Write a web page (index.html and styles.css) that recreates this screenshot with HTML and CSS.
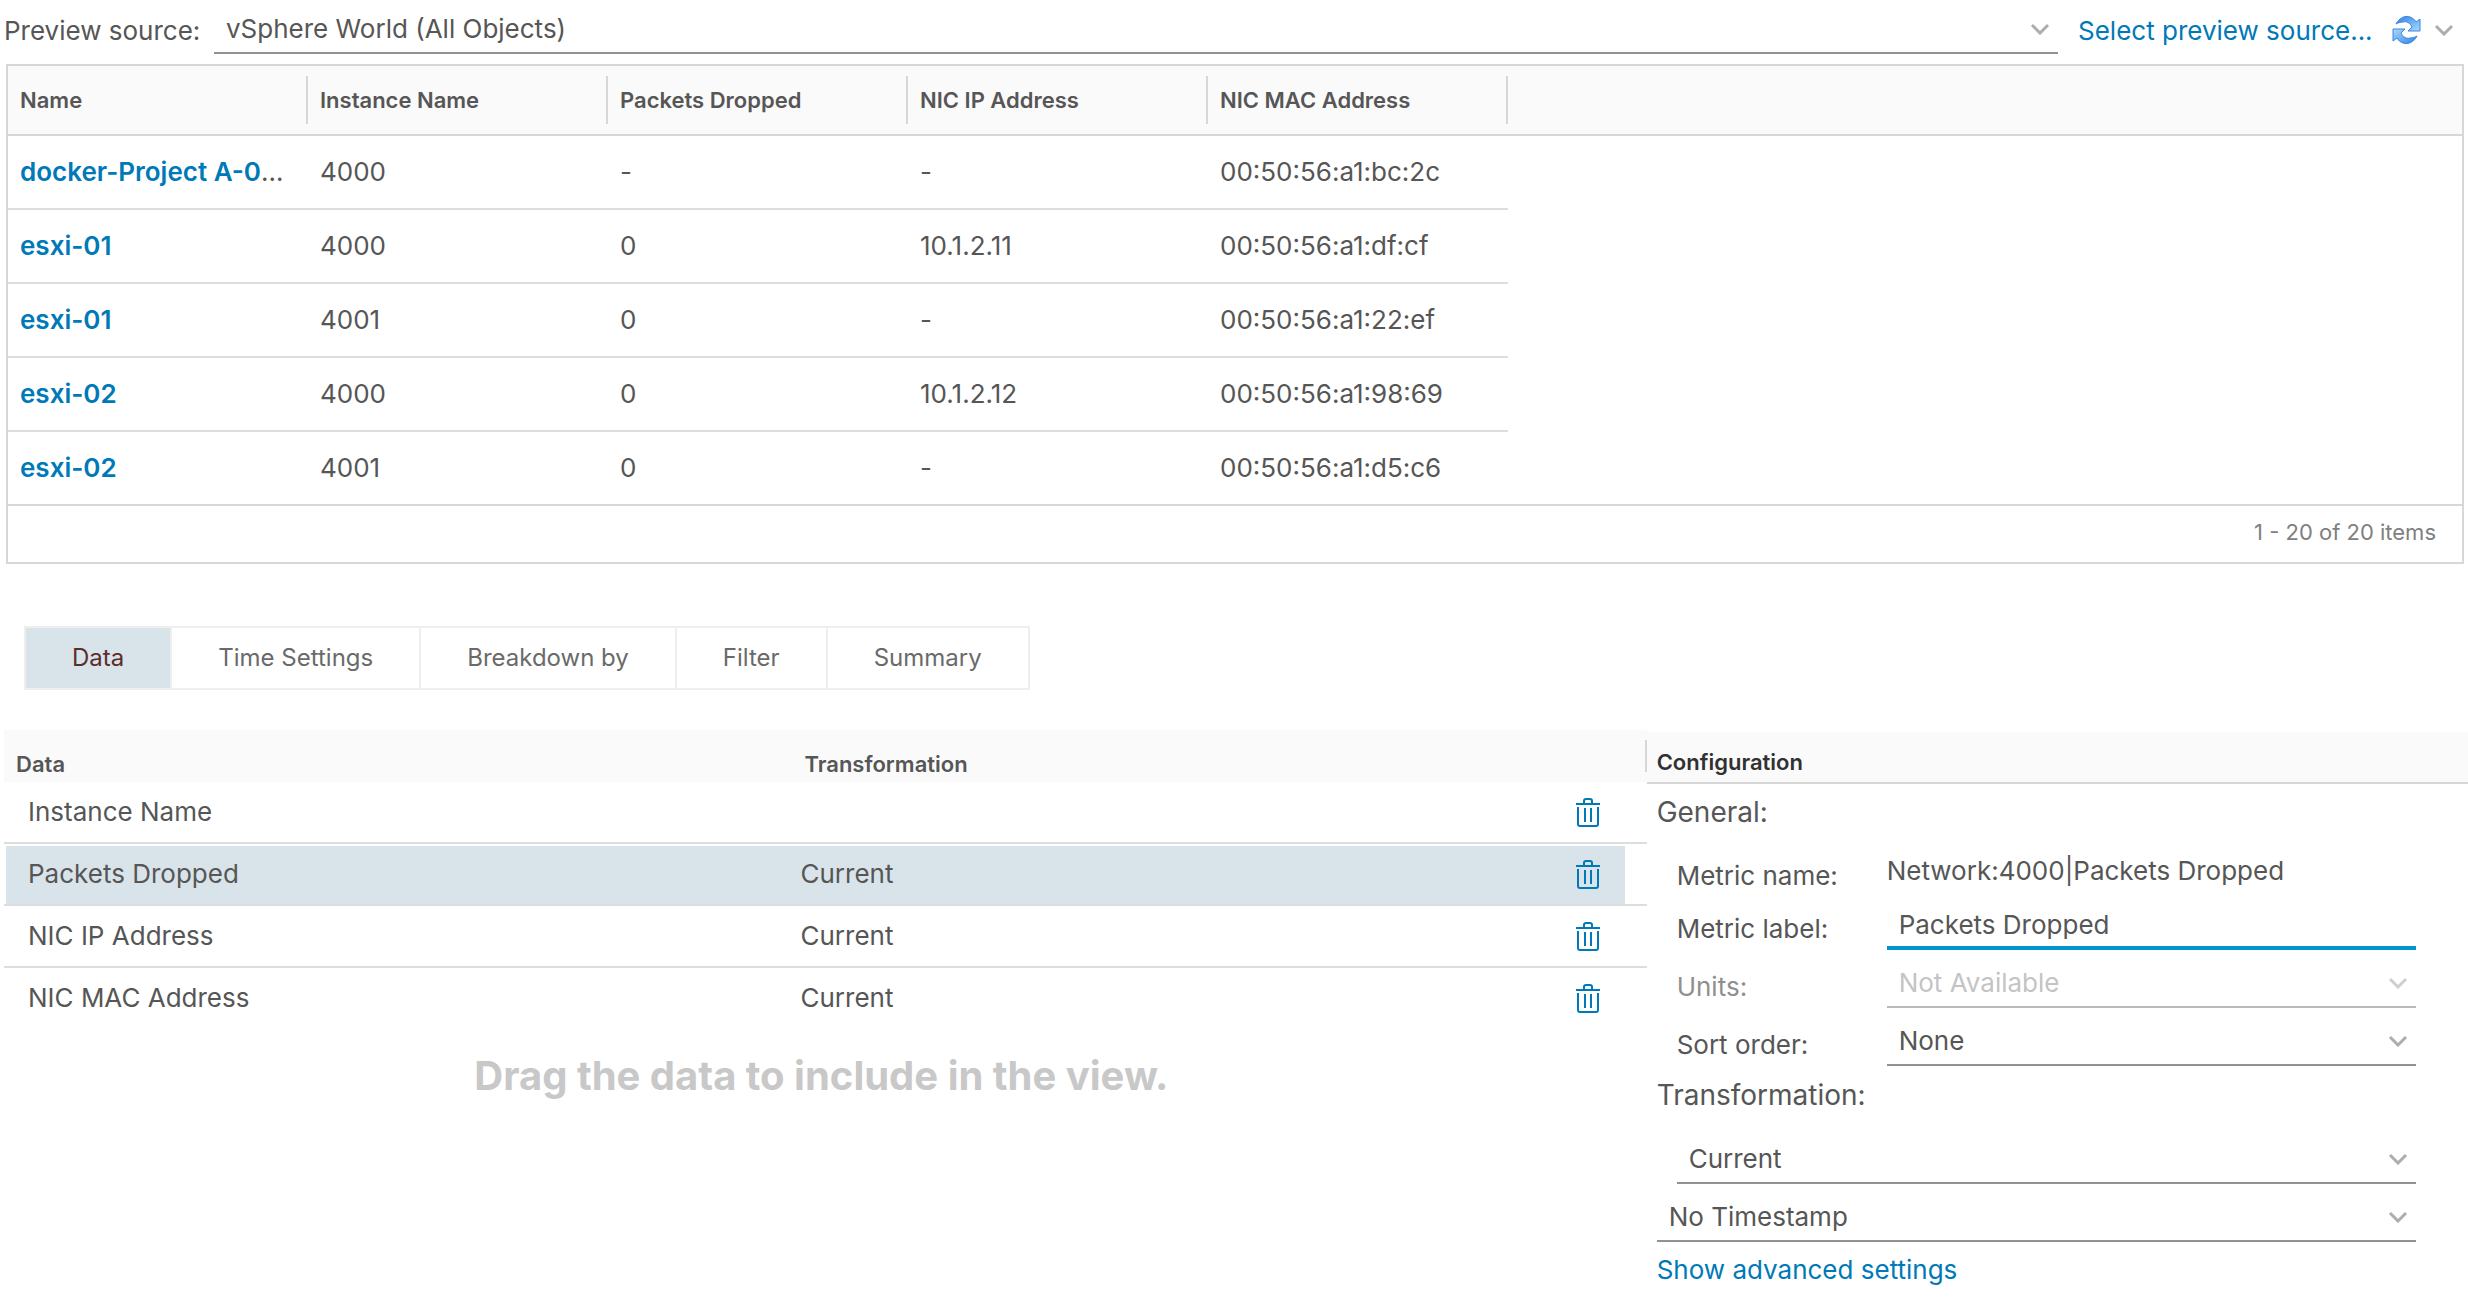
FILE: index.html
```html
<!DOCTYPE html>
<html lang="en">
<head>
    <meta charset="UTF-8">
    <meta name="viewport" content="width=device-width, initial-scale=1.0">
    <title>Edit View</title>
    <link rel="stylesheet" href="styles.css">
</head>
<body>
    <!-- Shared icons -->
    <svg class="sprite" aria-hidden="true">
        <symbol id="chevron" viewBox="0 0 20 12">
            <path d="M2 2l8 8 8-8" fill="none" stroke="currentColor" stroke-width="3"/>
        </symbol>
        <symbol id="trash" viewBox="0 0 26 30">
            <path d="M1 6h24M9 5V3q0-2 2-2h4q2 0 2 2v2" fill="none" stroke="currentColor" stroke-width="2"/>
            <path d="M3 9v17q0 2 2 2h16q2 0 2-2V9M10 10v14M16 10v14" fill="none" stroke="currentColor" stroke-width="2"/>
        </symbol>
        <symbol id="refresh" viewBox="0 0 30 30">
            <linearGradient id="refreshFill" x1="0" y1="0" x2="1" y2="1">
                <stop offset="0" stop-color="#2f80e0"/>
                <stop offset="1" stop-color="#a9dcff"/>
            </linearGradient>
            <path id="refreshArrow" d="M4 9C7 3 13 0 18 2c3 1 5 3 6 5l4-3v12H16l4-4c-2-4-5-6-9-5-3 0-5 1-7 2z" fill="url(#refreshFill)" stroke="#3c86e2" stroke-width="1" stroke-linejoin="round"/>
            <use href="#refreshArrow" transform="rotate(180 14.5 15)"/>
        </symbol>
    </svg>

    <div class="preview-bar">
        <label for="previewSource">Preview source:</label>
        <div class="select">
            <select id="previewSource">
                <option>vSphere World (All Objects)</option>
            </select>
            <svg class="chevron"><use href="#chevron"/></svg>
        </div>
        <a href="#" class="preview-link">Select preview source...</a>
        <button type="button" class="icon-btn" aria-label="Refresh">
            <svg class="refresh"><use href="#refresh"/></svg>
        </button>
        <button type="button" class="icon-btn more" aria-label="More">
            <svg class="chevron"><use href="#chevron"/></svg>
        </button>
    </div>

    <div class="grid">
        <table class="preview-table">
            <colgroup>
                <col class="col"><col class="col"><col class="col"><col class="col"><col class="col"><col>
            </colgroup>
            <thead>
                <tr>
                    <th><div>Name</div></th>
                    <th><div>Instance Name</div></th>
                    <th><div>Packets Dropped</div></th>
                    <th><div>NIC IP Address</div></th>
                    <th><div>NIC MAC Address</div></th>
                    <td></td>
                </tr>
            </thead>
            <tbody>
                <tr>
                    <td><a href="#">docker-Project A-0</a>…</td>
                    <td>4000</td>
                    <td>-</td>
                    <td>-</td>
                    <td>00:50:56:a1:bc:2c</td>
                </tr>
                <tr>
                    <td><a href="#">esxi-01</a></td>
                    <td>4000</td>
                    <td>0</td>
                    <td>10.1.2.11</td>
                    <td>00:50:56:a1:df:cf</td>
                </tr>
                <tr>
                    <td><a href="#">esxi-01</a></td>
                    <td>4001</td>
                    <td>0</td>
                    <td>-</td>
                    <td>00:50:56:a1:22:ef</td>
                </tr>
                <tr>
                    <td><a href="#">esxi-02</a></td>
                    <td>4000</td>
                    <td>0</td>
                    <td>10.1.2.12</td>
                    <td>00:50:56:a1:98:69</td>
                </tr>
                <tr>
                    <td><a href="#">esxi-02</a></td>
                    <td>4001</td>
                    <td>0</td>
                    <td>-</td>
                    <td>00:50:56:a1:d5:c6</td>
                </tr>
            </tbody>
        </table>
        <div class="grid-footer">1 - 20 of 20 items</div>
    </div>

    <div class="tabs">
        <button type="button" class="tab active">Data</button>
        <button type="button" class="tab">Time Settings</button>
        <button type="button" class="tab">Breakdown by</button>
        <button type="button" class="tab">Filter</button>
        <button type="button" class="tab">Summary</button>
    </div>

    <div class="panels">
        <div class="data-panel">
            <table class="data-table">
                <colgroup>
                    <col class="data-col"><col><col class="action-col">
                </colgroup>
                <thead>
                    <tr>
                        <th>Data</th>
                        <th>Transformation</th>
                        <td><div class="divider"></div></td>
                    </tr>
                </thead>
                <tbody>
                    <tr>
                        <td>Instance Name</td>
                        <td></td>
                        <td><button type="button" class="icon-btn" aria-label="Delete"><svg class="trash"><use href="#trash"/></svg></button></td>
                    </tr>
                    <tr class="selected">
                        <td>Packets Dropped</td>
                        <td>Current</td>
                        <td><button type="button" class="icon-btn" aria-label="Delete"><svg class="trash"><use href="#trash"/></svg></button></td>
                    </tr>
                    <tr>
                        <td>NIC IP Address</td>
                        <td>Current</td>
                        <td><button type="button" class="icon-btn" aria-label="Delete"><svg class="trash"><use href="#trash"/></svg></button></td>
                    </tr>
                    <tr>
                        <td>NIC MAC Address</td>
                        <td>Current</td>
                        <td><button type="button" class="icon-btn" aria-label="Delete"><svg class="trash"><use href="#trash"/></svg></button></td>
                    </tr>
                </tbody>
            </table>
            <p class="drop-hint">Drag the data to include in the view.</p>
        </div>

        <div class="config-panel">
            <h2>Configuration</h2>
            <form class="config-form">
                <h3>General:</h3>
                <div class="form-row name-row">
                    <span class="form-label">Metric name:</span>
                    <span>Network:4000|Packets Dropped</span>
                </div>
                <div class="form-row">
                    <label class="form-label" for="metricLabel">Metric label:</label>
                    <input type="text" id="metricLabel" value="Packets Dropped">
                </div>
                <div class="form-row disabled">
                    <label class="form-label" for="units">Units:</label>
                    <div class="select">
                        <select id="units" disabled>
                            <option>Not Available</option>
                        </select>
                        <svg class="chevron"><use href="#chevron"/></svg>
                    </div>
                </div>
                <div class="form-row">
                    <label class="form-label" for="sortOrder">Sort order:</label>
                    <div class="select">
                        <select id="sortOrder">
                            <option>None</option>
                        </select>
                        <svg class="chevron"><use href="#chevron"/></svg>
                    </div>
                </div>
                <h3 class="transformation">Transformation:</h3>
                <div class="select indent">
                    <select aria-label="Transformation">
                        <option>Current</option>
                    </select>
                    <svg class="chevron"><use href="#chevron"/></svg>
                </div>
                <div class="select">
                    <select aria-label="Timestamp">
                        <option>No Timestamp</option>
                    </select>
                    <svg class="chevron"><use href="#chevron"/></svg>
                </div>
                <a href="#" class="advanced">Show advanced settings</a>
            </form>
        </div>
    </div>
</body>
</html>
```
FILE: styles.css
```css
* {
    box-sizing: border-box;
}
body {
    margin: 0;
    padding: 6px 0 0 4px;
    font-family: Inter, "Noto Sans", sans-serif;
    font-size: 26px;
    line-height: 36px;
    color: #565656;
    background-color: #fff;
}
a {
    color: #0079b8;
    text-decoration: none;
}
h2, h3, p {
    margin: 0;
}
table {
    width: 100%;
    table-layout: fixed;
    border-collapse: separate;
    border-spacing: 0;
}
th, td {
    padding: 0;
    text-align: left;
}
th {
    font-size: 22px;
    font-weight: 600;
}
button, input, select {
    font: inherit;
    color: inherit;
}
.sprite {
    position: absolute;
    width: 0;
    height: 0;
}
.icon-btn {
    display: flex;
    padding: 0;
    border: none;
    background: none;
    color: #0079b8;
    cursor: pointer;
}
.chevron {
    width: 20px;
    height: 12px;
    color: #adadad;
}
.refresh {
    width: 30px;
    height: 30px;
}
.trash {
    width: 26px;
    height: 30px;
}

/* Drop-downs and text boxes */
.select {
    position: relative;
    flex: 1;
}
.select .chevron {
    position: absolute;
    right: 8px;
    top: 17px;
    pointer-events: none;
}
select, input {
    display: block;
    width: 100%;
    height: 48px;
    padding: 0 12px;
    border: none;
    border-bottom: 2px solid #919191;
    border-radius: 0;
    background: none;
    outline: none;
    appearance: none;
}
input {
    border-bottom: 4px solid #0094d2;
}
select:disabled {
    color: #c4c4c4;
    border-color: #b9b9b9;
    opacity: 1;
}

/* Preview */
.preview-bar {
    display: flex;
    align-items: center;
    padding-right: 14px;
}
.preview-bar label {
    width: 210px;
    padding-top: 2px;
    white-space: nowrap;
}
.preview-link {
    width: 294px;
    margin-left: 20px;
    padding-top: 2px;
    white-space: nowrap;
}
.preview-bar .icon-btn {
    margin-left: 20px;
}
.preview-bar .more {
    margin-left: 12px;
}
.grid {
    margin: 10px 4px 0 2px;
    border: 2px solid #d7d7d7;
}
.col {
    width: 300px;
}
.preview-table th, .preview-table thead td {
    height: 70px;
    background-color: #fafafa;
    border-bottom: 2px solid #d7d7d7;
}
.preview-table th div {
    height: 48px;
    padding-left: 12px;
    line-height: 48px;
    border-right: 2px solid #d7d7d7;
}
.preview-table tbody td {
    height: 74px;
    padding-left: 12px;
    border-bottom: 2px solid #ddd;
    white-space: nowrap;
}
.preview-table a {
    font-weight: 600;
}
.preview-table tbody tr:last-child td {
    height: 72px;
    border-bottom: none;
}
.grid-footer {
    height: 58px;
    padding-right: 26px;
    border-top: 2px solid #d7d7d7;
    font-size: 22px;
    line-height: 52px;
    text-align: right;
    color: #808080;
}

/* Tabs */
.tabs {
    display: flex;
    margin: 62px 20px 40px;
}
.tab {
    height: 64px;
    padding: 0 46px;
    border: 2px solid #eee;
    border-right: none;
    background-color: #fff;
    font-size: 24px;
    color: #6a6a6a;
    cursor: pointer;
}
.tab:last-child {
    border-right: 2px solid #eee;
}
.tab.active {
    background-color: #d9e4ea;
    color: #5c2d2d;
}

/* Data and configuration */
.panels {
    display: grid;
    grid-template-columns: 2fr 1fr;
}
.data-col {
    width: 48%;
}
.action-col {
    width: 80px;
}
.data-table thead th, .data-table thead td {
    height: 52px;
    background-color: #fafafa;
}
.data-table th {
    padding: 16px 0 0 12px;
}
.divider {
    height: 32px;
    border-right: 2px solid #d7d7d7;
}
.data-table tbody td {
    height: 62px;
    padding: 0 0 2px 8px;
    border-top: 2px solid transparent;
    border-bottom: 2px solid #ddd;
}
.data-table tbody td:first-child {
    padding-left: 24px;
}
.data-table tbody td:last-child {
    padding-bottom: 0;
}
.data-table tbody tr:last-child td {
    border-bottom-color: transparent;
}
.selected td {
    background: linear-gradient(#d9e4ea, #d9e4ea) no-repeat;
}
.selected td:first-child {
    background-position: 2px 0;
}
.selected td:last-child {
    background-size: calc(100% - 22px) 100%;
}
.drop-hint {
    padding: 22px 8px 0 0;
    font-size: 40px;
    font-weight: 700;
    line-height: 48px;
    text-align: center;
    color: #c8c8c8;
}
.config-panel {
    padding-top: 2px;
}
.config-panel h2 {
    height: 52px;
    padding: 12px 0 0 10px;
    border-bottom: 2px solid #d7d7d7;
    background-color: #fafafa;
    font-size: 22px;
    font-weight: 600;
    line-height: 36px;
    color: #313131;
}
.config-form {
    display: flex;
    flex-direction: column;
    gap: 10px;
    padding: 0 52px 0 10px;
}
.config-form h3 {
    font-size: 28px;
    font-weight: 400;
    line-height: 56px;
}
.config-form .transformation {
    padding-bottom: 12px;
    line-height: 38px;
}
.form-row {
    display: flex;
    align-items: center;
    padding-left: 20px;
}
.name-row {
    height: 42px;
}
.form-label {
    flex: 0 0 210px;
    padding-top: 6px;
}
.name-row .form-label {
    padding-top: 10px;
}
.form-row input {
    flex: 1;
}
.disabled .form-label {
    color: #8f8f8f;
}
.disabled .chevron {
    color: #cfcfcf;
}
.indent {
    margin-left: 20px;
}
.advanced {
    align-self: flex-start;
}
```
